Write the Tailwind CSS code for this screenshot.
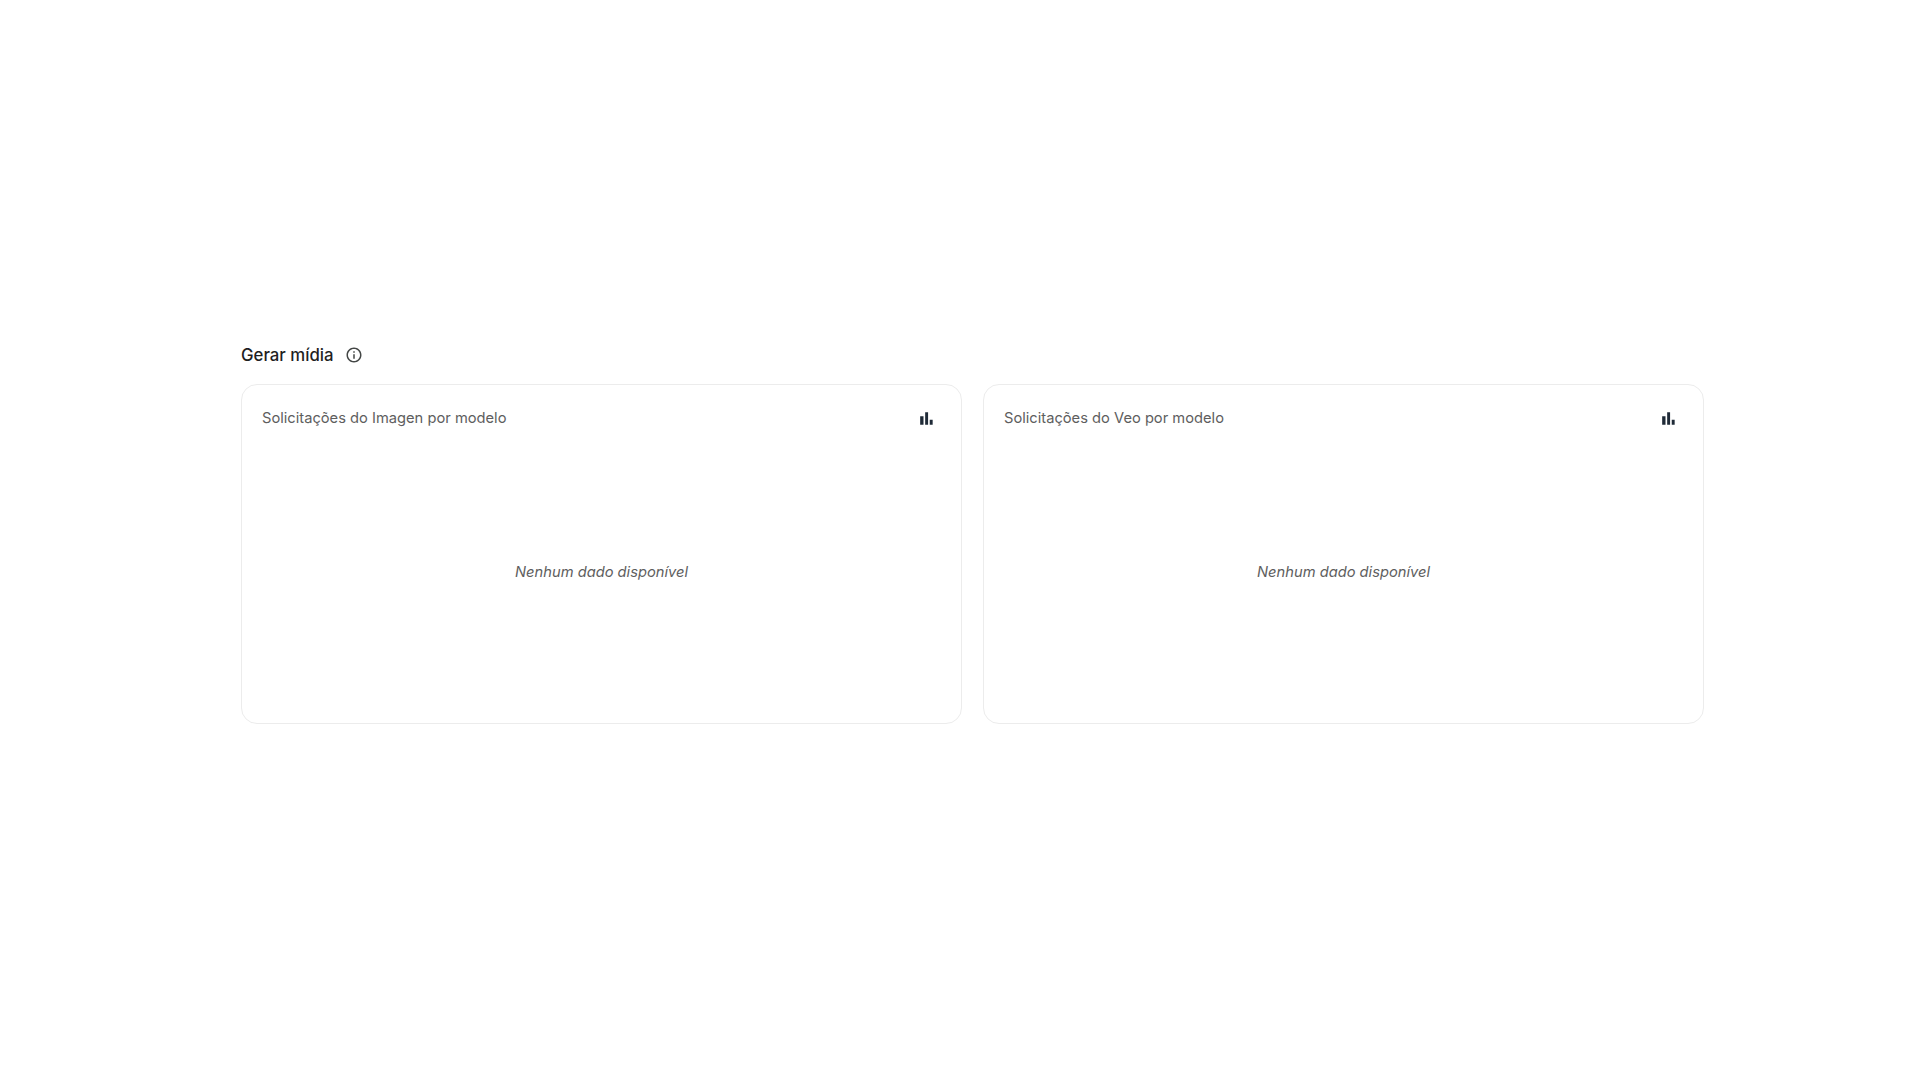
<!DOCTYPE html>
<html lang="en">
<head>
    <meta charset="UTF-8">
    <title>Gerar mídia</title>
    <script src="https://cdn.jsdelivr.net/npm/@tailwindcss/browser@4"></script>
</head>
<body class="bg-white font-['Inter',sans-serif]">
    <div class="w-[1920px] h-[1080px] pt-[343px] pl-[241px] overflow-hidden">
        <!-- Section title -->
        <div class="flex items-center h-6 mb-[17px]">
            <h2 class="text-[16.8px] font-medium text-[#1f1f1f] pt-[2px]">Gerar mídia</h2>
            <svg class="ml-[11px] w-[18px] h-[18px] text-[#444746]" viewBox="0 0 24 24" fill="currentColor">
                <path d="M11 7h2v2h-2zm0 4h2v6h-2zm1-9C6.48 2 2 6.48 2 12s4.48 10 10 10 10-4.48 10-10S17.52 2 12 2zm0 18c-4.41 0-8-3.59-8-8s3.590-8 8-8 8 3.590 8 8-3.590 8-8 8z"/>
            </svg>
        </div>

        <!-- Cards -->
        <div class="flex gap-[21px] w-[1463px]">
            <div class="flex-1 h-[340px] border border-[#ececec] rounded-2xl flex flex-col">
                <div class="flex items-start justify-between pl-[20px] pr-[25px] pt-[22px]">
                    <span class="text-[14.7px] text-[#5e5e5e]">Solicitações do Imagen por modelo</span>
                    <svg class="w-5 h-5 mt-px text-[#1f2a37]" viewBox="0 0 24 24" fill="currentColor">
                        <path d="M5 10h4v10H5zM11 5h3.500v15H11zM16.500 14H20v6h-3.500z"/>
                    </svg>
                </div>
                <div class="flex-1 flex items-center justify-center pb-[9px]">
                    <span class="text-[14.7px] italic text-[#5e5e5e]">Nenhum dado disponível</span>
                </div>
            </div>
            <div class="flex-1 h-[340px] border border-[#ececec] rounded-2xl flex flex-col">
                <div class="flex items-start justify-between pl-[20px] pr-[25px] pt-[22px]">
                    <span class="text-[14.7px] text-[#5e5e5e]">Solicitações do Veo por modelo</span>
                    <svg class="w-5 h-5 mt-px text-[#1f2a37]" viewBox="0 0 24 24" fill="currentColor">
                        <path d="M5 10h4v10H5zM11 5h3.500v15H11zM16.500 14H20v6h-3.500z"/>
                    </svg>
                </div>
                <div class="flex-1 flex items-center justify-center pb-[9px]">
                    <span class="text-[14.7px] italic text-[#5e5e5e]">Nenhum dado disponível</span>
                </div>
            </div>
        </div>
    </div>
</body>
</html>
